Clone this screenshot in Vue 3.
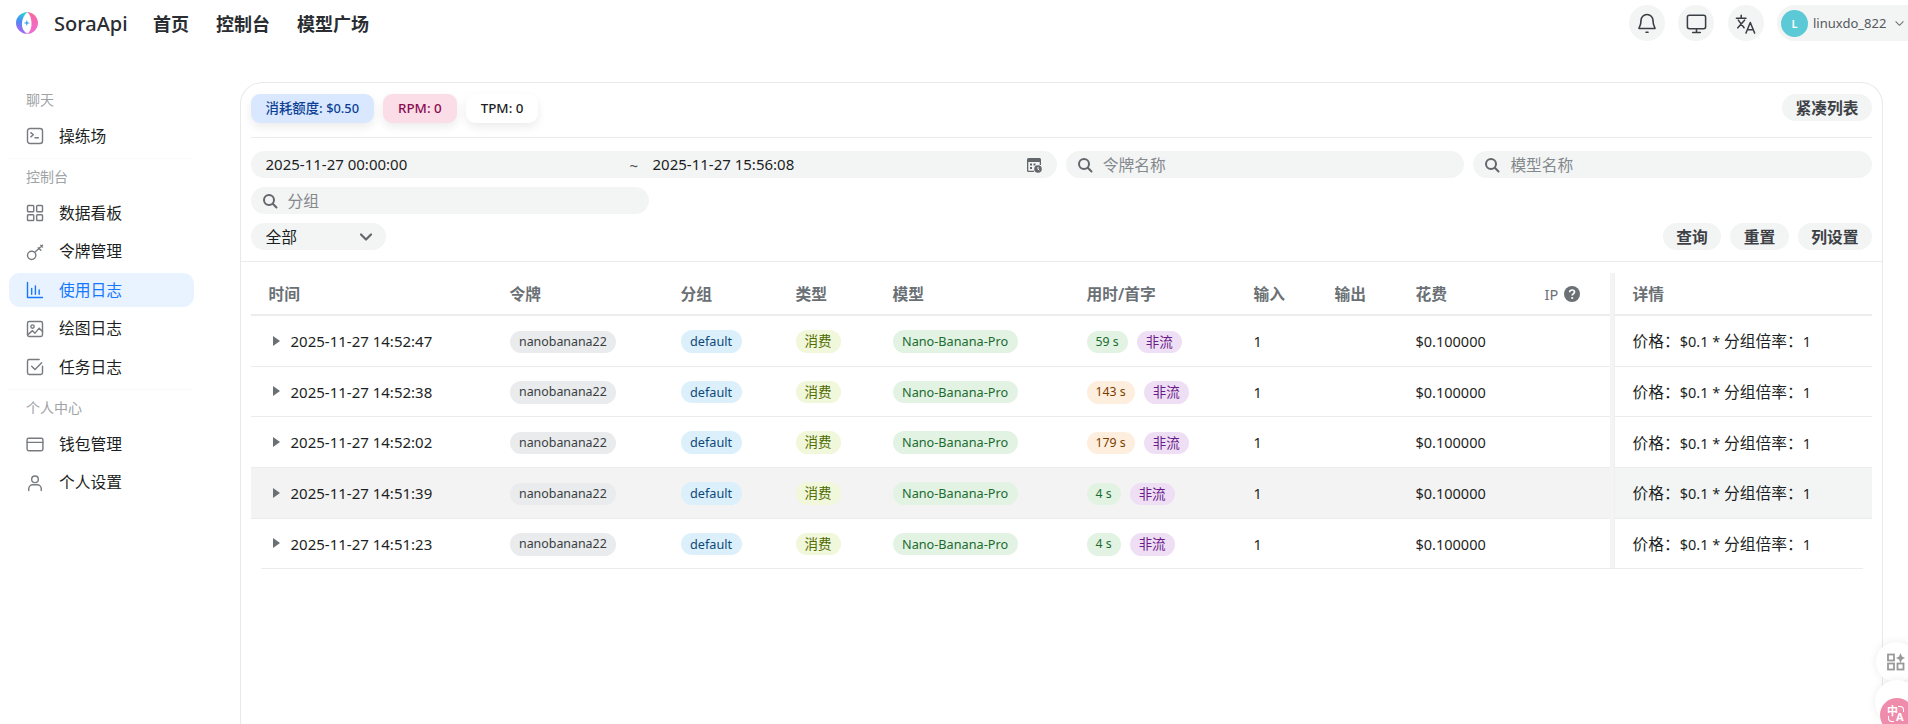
<template>
  <div class="page">
    <header class="topbar">
      <div class="brand">
        <svg class="logo" viewBox="0 0 24 24" width="24" height="24">
          <defs>
            <linearGradient id="logoLeft" x1="0.7" y1="0" x2="0.4" y2="1">
              <stop offset="0" stop-color="#28d8d8" />
              <stop offset="0.5" stop-color="#4a8cf5" />
              <stop offset="1" stop-color="#c05cf0" />
            </linearGradient>
            <linearGradient id="logoRight" x1="0.5" y1="0" x2="0.5" y2="1">
              <stop offset="0" stop-color="#f7699c" />
              <stop offset="1" stop-color="#f06ad8" />
            </linearGradient>
          </defs>
          <path d="M13 1C6 1 1 6 1 12c0 6 5 11 12 11C9 21 6.500 17 7 12 7.300 7 9.500 3 13 1z" fill="url(#logoLeft)" />
          <path d="M12 1c6 0 11 5 11 11s-5 11-11 11c3-2 4.700-6 4.500-11C16.300 7 15 3 12 1z" fill="url(#logoRight)" />
          <path d="M11.800 8.800l.8 2.400 2.400.8-2.400.8-.8 2.400-.8-2.400-2.400-.8 2.400-.8z" fill="#4aa5f0" />
        </svg>
        <span class="brand-name">SoraApi</span>
      </div>
      <nav class="topnav">
        <a v-for="n in navLinks" :key="n">{{ n }}</a>
      </nav>
      <div class="top-right">
        <button class="round-btn">
          <svg viewBox="0 0 24 24" width="24" height="24" fill="none" stroke="#3a3f45" stroke-width="1.600" stroke-linecap="round" stroke-linejoin="round">
            <path d="M6 9.500a6 6 0 0 1 12 0c0 5 2 6.500 2 8H4c0-1.500 2-3 2-8z" />
            <path d="M11 21.200h2" />
          </svg>
        </button>
        <button class="round-btn">
          <svg viewBox="0 0 24 24" width="23" height="23" fill="none" stroke="#3a3f45" stroke-width="1.600" stroke-linecap="round" stroke-linejoin="round">
            <rect x="2.500" y="3.500" width="19" height="14" rx="2" />
            <path d="M12 17.500v4M8 21.500h8" />
          </svg>
        </button>
        <button class="round-btn">
          <svg viewBox="0 0 24 24" width="23" height="23" fill="none" stroke="#3a3f45" stroke-width="1.600" stroke-linecap="round" stroke-linejoin="round">
            <path d="M2.500 6.500h10M7.500 3.500v3M4 16.500l7-8M4.500 8.500l6 8" />
            <path d="M12.500 22l4.500-11 4.500 11M14 18.500h6" />
          </svg>
        </button>
        <div class="user-pill">
          <span class="avatar">L</span>
          <span class="user-name">linuxdo_822</span>
          <svg viewBox="0 0 12 12" width="11" height="11" fill="none" stroke="#6b7075" stroke-width="1.100" stroke-linecap="round" stroke-linejoin="round"><path d="M2 4l4 4 4-4" /></svg>
        </div>
      </div>
    </header>

    <div class="body-row">
      <aside class="sidebar">
        <section v-for="g in menuGroups" :key="g.title" class="menu-group" :class="{ ruled: g.ruled }">
          <div class="group-title">{{ g.title }}</div>
          <a v-for="m in g.items" :key="m.label" class="menu-item" :class="{ active: m.active }">
            <svg viewBox="0 0 24 24" width="20" height="20" fill="none" stroke="currentColor" stroke-width="1.700" stroke-linecap="round" stroke-linejoin="round" v-html="m.icon"></svg>
            <span>{{ m.label }}</span>
          </a>
        </section>
      </aside>

      <main class="card">
        <div class="filters">
          <div class="stat-row">
            <div class="stats">
              <span class="stat blue">消耗额度: <span class="stat-num">$0.50</span></span>
              <span class="stat pink">RPM: 0</span>
              <span class="stat white">TPM: 0</span>
            </div>
            <button class="pill-btn">紧凑列表</button>
          </div>
          <div class="filter-grid">
            <div class="field date-range">
              <span class="date-a">2025-11-27 00:00:00</span>
              <span class="tilde">~</span>
              <span class="date-b">2025-11-27 15:56:08</span>
              <svg class="cal" viewBox="0 0 16 16" width="16" height="16">
                <path d="M2.500 1h11A1.500 1.500 0 0 1 15 2.500V8h-1.300V5H2.300v8.700H8V15H2.500A1.500 1.500 0 0 1 1 13.500v-11A1.500 1.500 0 0 1 2.500 1z" fill="#62676c" />
                <rect x="4" y="6.500" width="2" height="2" fill="#62676c" /><rect x="7.500" y="6.500" width="2" height="2" fill="#62676c" /><rect x="4" y="10" width="2" height="2" fill="#62676c" />
                <circle cx="12" cy="12" r="3.800" fill="#62676c" />
                <path d="M12 10v2.200l1.300.8" stroke="#fff" stroke-width="1" fill="none" />
              </svg>
            </div>
            <div v-for="p in searchFields" :key="p" class="field search">
              <svg viewBox="0 0 16 16" width="16" height="16" fill="none" stroke="#62676c" stroke-width="2" stroke-linecap="round"><circle cx="7" cy="7" r="5" /><path d="M10.800 10.800L14.500 14.500" /></svg>
              <span class="placeholder">{{ p }}</span>
            </div>
          </div>
          <div class="action-row">
            <div class="field select">
              <span>全部</span>
              <svg viewBox="0 0 16 16" width="16" height="16" fill="none" stroke="#62676c" stroke-width="2.200" stroke-linecap="round" stroke-linejoin="round"><path d="M3 5.500l5 5 5-5" /></svg>
            </div>
            <div class="actions">
              <button class="pill-btn">查询</button>
              <button class="pill-btn">重置</button>
              <button class="pill-btn">列设置</button>
            </div>
          </div>
        </div>

        <div class="table-wrap">
          <table class="log-table">
            <colgroup>
              <col v-for="(w, i) in colWidths" :key="i" :style="{ width: w + 'px' }" />
            </colgroup>
            <thead>
              <tr>
                <th>时间</th>
                <th>令牌</th>
                <th>分组</th>
                <th>类型</th>
                <th>模型</th>
                <th>用时/首字</th>
                <th>输入</th>
                <th>输出</th>
                <th>花费</th>
                <th>
                  <span class="ip-head">IP
                    <svg viewBox="0 0 16 16" width="16" height="16"><circle cx="8" cy="8" r="8" fill="#6b7075" /><path d="M5.600 6.200c0-1.400 1.100-2.200 2.500-2.200s2.400.8 2.400 2.100c0 1.800-2.300 1.800-2.300 3.400" fill="none" stroke="#fff" stroke-width="1.700" /><circle cx="8.200" cy="12" r="1.100" fill="#fff" /></svg>
                  </span>
                </th>
                <th class="fixed-col">详情</th>
              </tr>
            </thead>
            <tbody>
              <tr v-for="(r, i) in logs" :key="r.time" :class="{ hovered: i === 3 }">
                <td>
                  <span class="time-cell"><i class="caret"></i>{{ r.time }}</span>
                </td>
                <td><span class="tag gray token">nanobanana22</span></td>
                <td><span class="tag sky latin">default</span></td>
                <td><span class="tag lime">消费</span></td>
                <td><span class="tag green latin">Nano-Banana-Pro</span></td>
                <td>
                  <span class="duration">
                    <span class="tag used" :class="r.speed">{{ r.used }}</span>
                    <span class="tag purple">非流</span>
                  </span>
                </td>
                <td class="num">1</td>
                <td></td>
                <td class="num">$0.100000</td>
                <td></td>
                <td class="fixed-col detail">价格：<span class="num">$0.1 * </span>分组倍率：<span class="num">1</span></td>
              </tr>
            </tbody>
          </table>
          <div class="table-end"></div>
        </div>
      </main>
    </div>

    <div class="float-btn tools">
      <svg viewBox="0 0 18 18" width="18" height="18" fill="none" stroke="#999" stroke-width="1.800">
        <rect x="1" y="1.500" width="6" height="6" /><rect x="1" y="10.500" width="6" height="6" /><rect x="10.500" y="10.500" width="6" height="6" />
        <path d="M13.500 0l1.500 3.500 3 1.500-3 1.500-1.500 3.500-1.500-3.500-3-1.500 3-1.500z" fill="#999" stroke="none" />
      </svg>
    </div>
    <div class="float-btn lang">
      <span class="lang-inner">
        <span class="lang-a">中</span><span class="lang-b">A</span>
      </span>
    </div>
  </div>
</template>

<script setup>
const navLinks = ['首页', '控制台', '模型广场']
const searchFields = ['令牌名称', '模型名称', '分组']
const colWidths = [241, 171, 115, 97, 194, 167, 81, 81, 129, 87, 258]

// 侧边栏
const menuGroups = [
  {
    title: '聊天',
    ruled: true,
    items: [
      { label: '操练场', icon: '<rect x="3" y="3" width="18" height="18" rx="3"/><path d="M7 8l3 2.500-3 2.500M12 14h4"/>' }
    ]
  },
  {
    title: '控制台',
    ruled: true,
    items: [
      { label: '数据看板', icon: '<rect x="3" y="3" width="7.500" height="7.500" rx="1"/><rect x="14" y="3" width="7" height="7.500" rx="1"/><rect x="3" y="14" width="7.500" height="7" rx="1"/><rect x="14" y="14" width="7" height="7" rx="1"/>' },
      { label: '令牌管理', icon: '<circle cx="8" cy="16" r="5"/><path d="M12 12l9-8M16 7l3 3M19 4l2 2"/>' },
      { label: '使用日志', active: true, icon: '<path d="M3 3v18h18"/><path d="M8 10v7M12.500 7v10M17 12v5"/>' },
      { label: '绘图日志', icon: '<rect x="3" y="3" width="18" height="18" rx="2"/><circle cx="9" cy="9" r="2"/><path d="M3 19l6-5 3 3 5-6 4 4"/>' },
      { label: '任务日志', icon: '<path d="M21 11v8a2 2 0 0 1-2 2H5a2 2 0 0 1-2-2V5a2 2 0 0 1 2-2h12"/><path d="M8 11l4 4 8-8"/>' }
    ]
  },
  {
    title: '个人中心',
    items: [
      { label: '钱包管理', icon: '<rect x="2.500" y="5" width="19" height="15" rx="2"/><path d="M2.500 10h19"/>' },
      { label: '个人设置', icon: '<circle cx="12" cy="7.500" r="4"/><path d="M4.500 21v-2a5 5 0 0 1 5-5h5a5 5 0 0 1 5 5v2"/>' }
    ]
  }
]

const logs = [
  { time: '2025-11-27 14:52:47', used: '59 s', speed: 'green' },
  { time: '2025-11-27 14:52:38', used: '143 s', speed: 'orange' },
  { time: '2025-11-27 14:52:02', used: '179 s', speed: 'orange' },
  { time: '2025-11-27 14:51:39', used: '4 s', speed: 'green' },
  { time: '2025-11-27 14:51:23', used: '4 s', speed: 'green' }
]
</script>

<style>
html, body {
  margin: 0;
  overflow: hidden;
  background: #fff;
}
</style>

<style scoped>
.page {
  width: 1908px;
  height: 724px;
  overflow: hidden;
  position: relative;
  display: flex;
  flex-direction: column;
  font-family: "Noto Sans", "Noto Sans CJK SC", sans-serif;
  font-size: 15.750px;
  color: #1c1f23;
}

/* 顶栏 */
.topbar {
  height: 46px;
  flex: none;
  display: flex;
  align-items: center;
  padding-left: 15px;
}
.brand {
  display: flex;
  align-items: center;
  gap: 15px;
  width: 138px;
}
.logo {
  flex: none;
}
.brand-name {
  font-size: 20px;
  font-weight: 500;
  color: #2a2d31;
}
.topnav {
  display: flex;
  gap: 27px;
}
.topnav a {
  font-size: 18px;
  font-weight: 700;
  color: #2a2d31;
}
.top-right {
  margin-left: auto;
  display: flex;
  align-items: center;
}
.round-btn {
  width: 36px;
  height: 36px;
  margin-right: 13.500px;
  border: none;
  border-radius: 50%;
  background: #f3f4f4;
  padding: 0;
  display: flex;
  align-items: center;
  justify-content: center;
}
.user-pill {
  width: 131px;
  height: 36px;
  box-sizing: border-box;
  border-radius: 18px 0 0 18px;
  background: #f3f4f4;
  display: flex;
  align-items: center;
  padding-left: 4px;
}
.avatar {
  width: 27px;
  height: 27px;
  border-radius: 50%;
  background: #5bcad6;
  color: #fff;
  font-size: 11px;
  font-weight: 600;
  display: flex;
  align-items: center;
  justify-content: center;
}
.user-name {
  margin: 0 8px 0 5px;
  font-size: 13px;
  color: #55595e;
}

.body-row {
  flex: 1;
  display: flex;
  min-height: 0;
}

/* 侧边栏 */
.sidebar {
  width: 239.500px;
  flex: none;
  padding: 44px 0 0 9px;
  box-sizing: border-box;
}
.menu-group {
  width: 185px;
  margin-bottom: 8.500px;
}
.menu-group.ruled {
  border-bottom: 1px solid #fafafa;
}
.group-title {
  height: 20px;
  line-height: 20px;
  padding-left: 17px;
  margin-bottom: 9px;
  font-size: 14px;
  color: #a0a3a6;
}
.menu-item {
  height: 34px;
  margin-bottom: 4.500px;
  display: flex;
  align-items: center;
  gap: 14.500px;
  padding-left: 15.500px;
  border-radius: 11px;
  font-size: 15.750px;
  color: #777b80;
}
.menu-item span {
  color: #1c1f23;
  padding-bottom: 2px;
}
.menu-item.active {
  background: #e8f3ff;
  color: #1677ff;
}
.menu-item.active span {
  color: #1677ff;
}

/* 主卡片 */
.card {
  width: 1643.500px;
  margin-top: 36px;
  box-sizing: border-box;
  border: 1px solid #e9e9e9;
  border-bottom: none;
  border-radius: 22px 22px 0 0;
}
.filters {
  padding: 11px 10px 11px;
  border-bottom: 1px solid #ececec;
}
.stat-row {
  height: 44px;
  box-sizing: border-box;
  display: flex;
  justify-content: space-between;
  align-items: flex-start;
  border-bottom: 1px solid #ececec;
  margin-bottom: 13px;
}
.stats {
  display: flex;
  gap: 9px;
}
.stat {
  height: 29px;
  line-height: 29px;
  padding: 0 15px;
  border-radius: 9px;
  font-size: 13.400px;
  font-weight: 500;
  box-shadow: 0 4px 10px rgba(0, 0, 0, 0.08);
}
.stat-num {
  font-size: 12.800px;
}
.stat.blue {
  background: #dae8ff;
  color: #0c3f94;
}
.stat.pink {
  background: #fbdde8;
  color: #8a0b4f;
}
.stat.white {
  background: #fff;
  color: #1c1f23;
}
.pill-btn {
  height: 27px;
  padding: 0 13.500px;
  border: none;
  border-radius: 14px;
  background: #f3f4f4;
  font-family: inherit;
  font-size: 15.750px;
  font-weight: 600;
  color: #3d4146;
}
.filter-grid {
  display: grid;
  grid-template-columns: repeat(4, 1fr);
  gap: 9px;
  margin-bottom: 9px;
}
.field {
  height: 27px;
  box-sizing: border-box;
  border-radius: 14px;
  background: #f3f4f4;
  display: flex;
  align-items: center;
}
.date-range {
  grid-column: span 2;
  padding: 0 15px;
  font-size: 15px;
}
.date-a {
  width: 364px;
  padding-bottom: 2px;
}
.date-b {
  padding-bottom: 2px;
}
.tilde {
  width: 23px;
  color: #4a4e53;
}
.cal {
  margin-left: auto;
}
.search {
  padding-left: 11px;
  gap: 10px;
}
.placeholder {
  color: #85898d;
}
.action-row {
  display: flex;
  justify-content: space-between;
}
.select {
  width: 135px;
  padding: 0 12px 0 15px;
  justify-content: space-between;
}
.actions {
  display: flex;
  gap: 9px;
}

/* 表格 */
.table-wrap {
  padding: 11px 10px 0;
  position: relative;
}
.log-table {
  width: 1621px;
  table-layout: fixed;
  border-collapse: separate;
  border-spacing: 0;
}
.log-table th {
  height: 43px;
  box-sizing: border-box;
  padding: 0 18px;
  text-align: left;
  font-size: 15.750px;
  font-weight: 600;
  color: #6b7075;
  border-bottom: 2px solid #ececec;
}
.log-table td {
  height: 50.700px;
  box-sizing: border-box;
  padding: 0 18px;
  border-bottom: 1px solid #ececec;
  white-space: nowrap;
}
.log-table tr:last-child td {
  border-bottom-color: transparent;
}
.log-table td.num,
.detail .num {
  font-size: 14.500px;
}
.fixed-col {
  background: #fff;
  border-left: 1px solid #f0f0f0;
  box-shadow: -4px 0 0 #f4f4f4;
}
.hovered td {
  background: #f3f3f3;
}
.hovered td.fixed-col {
  background: #f3f5f5;
}
.table-end {
  position: absolute;
  left: 20px;
  right: 19px;
  bottom: 0;
  height: 1px;
  background: #ececec;
}
.ip-head {
  display: inline-flex;
  align-items: center;
  gap: 6px;
  font-size: 14.500px;
  font-weight: 400;
}
.time-cell {
  display: inline-flex;
  align-items: center;
  font-size: 15px;
  padding-bottom: 2px;
}
.caret {
  width: 0;
  height: 0;
  margin: -1px 11px 0 4px;
  border-left: 7px solid #6b7075;
  border-top: 5px solid transparent;
  border-bottom: 5px solid transparent;
}
.tag {
  display: inline-block;
  height: 22.500px;
  line-height: 22.500px;
  padding: 0 9px;
  border-radius: 11.500px;
  font-size: 13.500px;
}
.tag.latin {
  padding: 0 9.500px;
  font-size: 12.700px;
}
.tag.token {
  padding: 0 9.500px;
  font-size: 12.400px;
}
.tag.used {
  padding: 0 9px;
  font-size: 12.300px;
}
.tag.gray {
  background: #e9ebec;
  color: #3a3e43;
}
.tag.sky {
  background: #dcf0fc;
  color: #0e4a78;
}
.tag.lime {
  background: #f1f7da;
  color: #4d6b00;
}
.tag.green {
  background: #e2f3e4;
  color: #1c6b30;
}
.tag.orange {
  background: #feeedd;
  color: #7a3d00;
}
.tag.purple {
  background: #efdff5;
  color: #6a1b8a;
}
.duration {
  display: inline-flex;
  gap: 9px;
}

/* 右侧悬浮 */
.float-btn {
  position: absolute;
  border-radius: 50%;
  background: #fff;
  box-shadow: 0 0 10px rgba(0, 0, 0, 0.08);
  display: flex;
  align-items: center;
  justify-content: center;
}
.tools {
  width: 40px;
  height: 40px;
  left: 1876px;
  top: 642px;
}
.lang {
  width: 44px;
  height: 44px;
  left: 1875px;
  top: 680px;
}
.lang-inner {
  position: relative;
  top: 13px;
  width: 34px;
  height: 34px;
  border-radius: 50%;
  background: #f08cab;
  color: #fff;
  font-weight: 700;
}
.lang-inner::before,
.lang-inner::after {
  content: "";
  position: absolute;
  width: 5px;
  height: 5px;
  border: 0 solid #fff;
}
.lang-inner::before {
  left: 18px;
  top: 8px;
  border-width: 1.500px 1.500px 0 0;
  border-top-right-radius: 4px;
}
.lang-inner::after {
  left: 8px;
  top: 18px;
  border-width: 0 0 1.500px 1.500px;
  border-bottom-left-radius: 4px;
}
.lang-a {
  position: absolute;
  left: 7px;
  top: 7px;
  font-size: 11px;
  line-height: 11px;
}
.lang-b {
  position: absolute;
  left: 16px;
  top: 14px;
  font-size: 11px;
  line-height: 10px;
}
</style>
